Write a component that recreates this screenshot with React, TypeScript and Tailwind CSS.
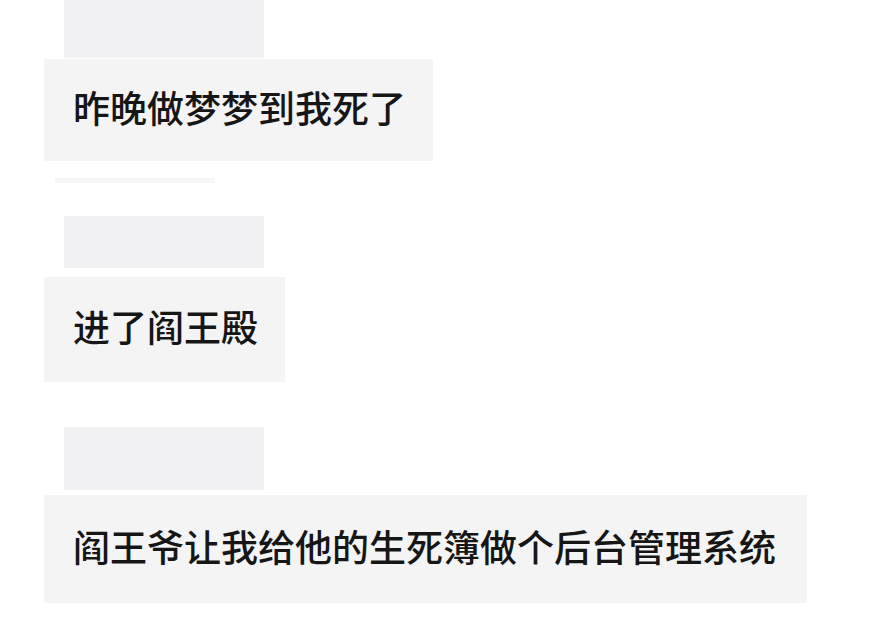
const font = { fontFamily: '"Noto Sans CJK SC", "Noto Sans", sans-serif' }

type Message = {
  text: string
  nameHeight: string
  gapTop: string
  bubbleTop: string
  bubbleHeight: string
  padRight: string
}

const messages: Message[] = [
  { text: "昨晚做梦梦到我死了", gapTop: "mt-0", nameHeight: "h-[58px]", bubbleTop: "mt-[1px]", bubbleHeight: "h-[102px]", padRight: "pr-[27px]" },
  { text: "进了阎王殿", gapTop: "mt-[55px]", nameHeight: "h-[52px]", bubbleTop: "mt-[9px]", bubbleHeight: "h-[105px]", padRight: "pr-[27px]" },
  { text: "阎王爷让我给他的生死簿做个后台管理系统", gapTop: "mt-[45px]", nameHeight: "h-[63px]", bubbleTop: "mt-[5px]", bubbleHeight: "h-[108px]", padRight: "pr-[31px]" },
]

export default function App() {
  return (
    <div className="w-[894px] h-[626px] bg-white overflow-hidden flex flex-col" style={font}>
      {messages.map((m, i) => (
        <div key={i} className={`flex flex-col items-start ${m.gapTop}`}>
          {/* blurred nickname */}
          <div className={`ml-[64px] w-[200px] ${m.nameHeight} bg-[#f1f1f3]`} />
          {/* bubble */}
          <div
            className={`ml-[44px] ${m.bubbleTop} ${m.bubbleHeight} bg-[#f4f4f4] pl-[29px] ${m.padRight} flex items-center`}
          >
            <span className="text-[37px] leading-none text-[#161616] font-medium whitespace-nowrap -translate-y-[3px]">
              {m.text}
            </span>
          </div>
          {i === 0 && <div className="ml-[55px] mt-[17px] w-[160px] h-[5px] bg-[#f6f6f6] -mb-[22px]" />}
        </div>
      ))}
    </div>
  )
}
